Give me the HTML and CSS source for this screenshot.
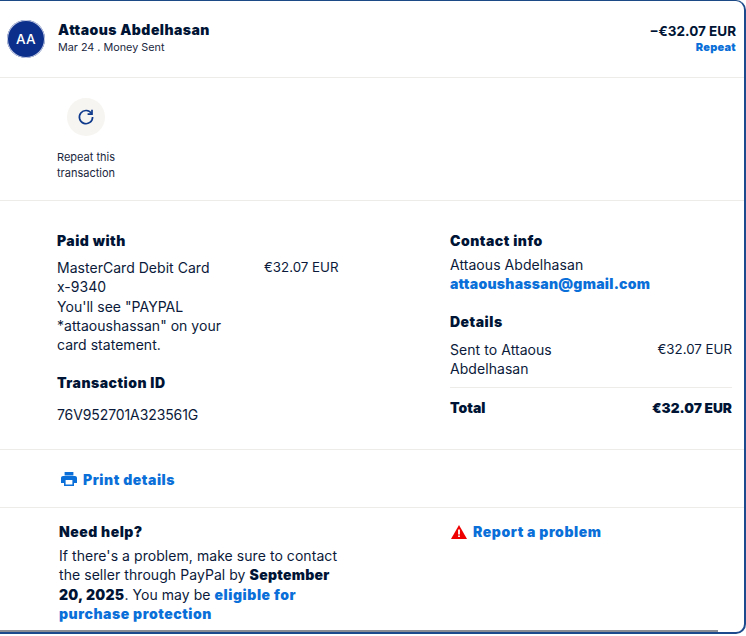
FILE: index.html
```html
<!DOCTYPE html>
<html lang="en">
<head>
<meta charset="utf-8">
<title>Transaction details</title>
<link rel="stylesheet" href="styles.css">
</head>
<body>
<main class="card">
  <header class="head section">
    <div class="avatar">AA</div>
    <div class="who">
      <div class="name">Attaous Abdelhasan</div>
      <div class="sub">Mar 24 . Money Sent</div>
    </div>
    <div class="amount">
      <div class="sum">−€32.07 EUR</div>
      <a class="repeat-link">Repeat</a>
    </div>
  </header>
  <section class="actions section">
    <div class="action">
      <div class="round">
        <svg width="18" height="18" viewBox="0 0 18 18" fill="none" stroke="#0f3a8c" stroke-width="1.7"><path d="M14.6 5.6A6.6 6.6 0 1 0 15.6 9"/><path d="M15 1.8v4.4h-4.4"/></svg>
      </div>
      <div class="action-label">Repeat this transaction</div>
    </div>
  </section>
  <section class="info section">
    <div class="col-left">
      <h3 class="title">Paid with</h3>
      <div class="pay-row">
        <div class="pay-text">
          <div class="pay-line">MasterCard Debit Card x-9340</div>
          <div class="pay-line">You'll see "PAYPAL *attaoushassan" on your card statement.</div>
        </div>
        <div class="money">€32.07 EUR</div>
      </div>
      <h3 class="title txn">Transaction ID</h3>
      <div class="txn-id">76V952701A323561G</div>
    </div>
    <div class="col-right">
      <h3 class="title">Contact info</h3>
      <div class="contact">Attaous Abdelhasan</div>
      <a class="link email">attaoushassan@gmail.com</a>
      <h3 class="title details">Details</h3>
      <div class="row sent">
        <div class="sent-to">Sent to Attaous Abdelhasan</div>
        <div class="money">€32.07 EUR</div>
      </div>
      <div class="row total">
        <div>Total</div>
        <div class="total-sum">€32.07 EUR</div>
      </div>
    </div>
  </section>
  <section class="print section">
    <svg class="print-ico" width="16" height="14" viewBox="0 0 16 14"><path fill="#0a6fd8" d="M3.6 0h8.8v3.6H3.6zM2 4h12c1.1 0 2 .9 2 2v5h-3v3H3v-3H0V6c0-1.100.9-2 2-2z"/><path fill="#fff" d="M4.600 8h6.800v4.500H4.600z"/></svg>
    <a class="link wide">Print details</a>
  </section>
  <section class="help section">
    <div class="help-left">
      <h3 class="title">Need help?</h3>
      <p class="help-text">If there's a problem, make sure to contact the seller through PayPal by <b class="strong">September 20, 2025</b>. You may be <a class="link wide">eligible for purchase protection</a></p>
    </div>
    <div class="help-right">
      <svg width="16" height="14" viewBox="0 0 16 14"><path d="M8 0l8 14H0z" fill="#ee0000"/><path d="M7.100 4.600h1.800v5H7.100zM7.100 10.400h1.800v1.700H7.100z" fill="#fff"/></svg>
      <a class="link wide">Report a problem</a>
    </div>
  </section>
  <div class="rule"></div>
</main>
</body>
</html>
```

FILE: styles.css
```css
* { box-sizing: border-box; }
html, body { margin: 0; padding: 0; background: #fff; }
body {
  width: 746px;
  height: 636px;
  overflow: hidden;
  font-family: Inter, "Liberation Sans", sans-serif;
  color: #0b1a3a;
  font-size: 14px;
  letter-spacing: 0.06px;
}
.card {
  height: 634px;
  border-top: 1px solid #1b4a86;
  border-right: 2px solid #1c4a8c;
  border-bottom: 2px solid #1c4a8c;
  border-radius: 0 10px 10px 0;
  display: flex;
  flex-direction: column;
}
.section { border-bottom: 1px solid #eeece8; }
.head {
  height: 77px;
  display: flex;
  align-items: center;
  padding: 0 8px 0 7px;
  flex: none;
}
.avatar {
  width: 38px;
  height: 38px;
  border-radius: 50%;
  background: #0b2f8a;
  color: #fff;
  font-weight: 500;
  font-size: 13.5px;
  letter-spacing: 0.4px;
  display: flex;
  align-items: center;
  justify-content: center;
  box-shadow: 0 0 0 1px #c9cfe6 inset;
}
.who { margin-left: 13px; flex: 1; margin-top: -1px; }
.name { font-size: 14px; font-weight: 900; color: #001435; line-height: 18px; letter-spacing: 0.47px; margin-top: -1px; }
.sub { font-size: 10.8px; line-height: 16px; color: #1a2740; letter-spacing: 0; margin-top: 1px; }
.amount { text-align: right; margin-top: -2px; }
.sum { font-size: 13.5px; font-weight: 700; color: #001435; line-height: 18px; letter-spacing: 0; }
.repeat-link { display: block; font-size: 11px; font-weight: 900; color: #0a6fd8; line-height: 14px; letter-spacing: 0.25px; }
.actions { height: 123px; padding: 20px 0 0 57px; flex: none; }
.action { width: 62px; display: flex; flex-direction: column; align-items: flex-start; }
.round {
  width: 38px;
  height: 38px;
  margin-left: 10px;
  border-radius: 50%;
  background: #f7f5f1;
  display: flex;
  align-items: center;
  justify-content: center;
}
.action-label { margin-top: 13px; font-size: 11px; line-height: 16px; color: #1a2740; letter-spacing: 0; }
.info {
  height: 249px;
  display: flex;
  padding: 31px 12px 0 57px;
  flex: none;
}
.title { margin: 0; font-size: 14px; font-weight: 900; line-height: 18px; color: #001435; letter-spacing: 0.5px; }
.col-left { width: 393px; flex: none; }
.pay-row { display: flex; margin-top: 8px; line-height: 19.3px; }
.pay-text { width: 207px; flex: none; padding-right: 40px; letter-spacing: 0.03px; }
.money { font-size: 13.3px; letter-spacing: 0; }
.txn { margin-top: 20px; }
.txn-id { margin-top: 14px; line-height: 18px; letter-spacing: -0.1px; }
.col-right { flex: 1; }
.contact { margin-top: 6px; line-height: 18px; }
.link { color: #0a6fd8; font-weight: 900; letter-spacing: 0.27px; }
.wide { letter-spacing: 0.55px; }
.email { display: block; line-height: 20px; }
.details { margin-top: 19px; }
.row { display: flex; justify-content: space-between; }
.sent { margin-top: 9px; line-height: 19px; padding-bottom: 9px; border-bottom: 1px solid #eeece8; }
.sent-to { width: 150px; }
.total { margin-top: 11px; font-weight: 900; color: #001435; line-height: 18px; letter-spacing: 0; }
.total-sum { font-size: 13.7px; }
.print {
  height: 58px;
  display: flex;
  align-items: center;
  gap: 6px;
  padding: 1px 0 0 61px;
  flex: none;
}
.print-ico { flex: none; }
.help {
  flex: 1;
  display: flex;
  border-bottom: 0;
  padding: 15px 0 0 59px;
}
.help-left { width: 391px; flex: none; }
.help-text { margin: 5px 0 0; width: 285px; line-height: 19.3px; }
.strong { font-weight: 900; color: #001435; letter-spacing: 0.28px; }
.help-right { display: flex; align-items: center; gap: 6px; height: 17px; margin-left: 1px; }
.rule { height: 2px; background: #8a8d93; width: 718px; flex: none; }
```
